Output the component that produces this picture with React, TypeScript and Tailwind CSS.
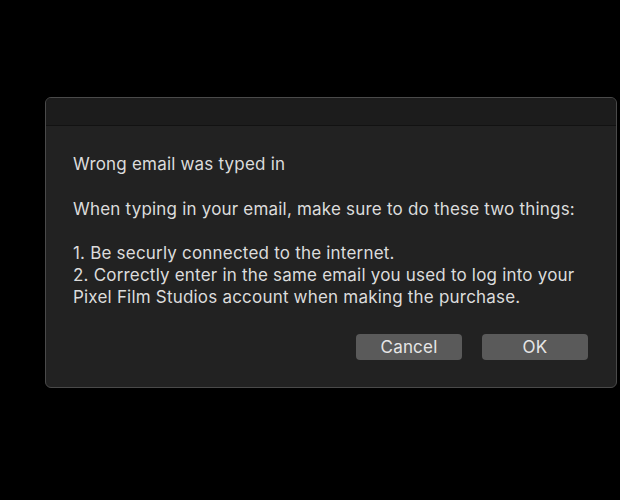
import React from "react";

export default function App() {
  return (
    <div className="w-[620px] h-[500px] bg-black relative" style={{ fontFamily: 'Inter, "Liberation Sans", Arial, sans-serif' }}>
      <div className="absolute left-[45px] top-[97px] w-[572px] h-[291px] rounded-[6px] border border-[#4a4a4a] bg-[#222222] flex flex-col overflow-hidden">
        <div className="h-[28px] bg-[#1c1c1c] border-b border-[#121212]" />
        <div className="flex-1 flex flex-col pl-[27px] pr-[20px] text-[17px] tracking-[0.2px] text-[#dcdcdc] leading-[22px]">
          <div className="mt-[27px]">Wrong email was typed in</div>
          <div className="mt-[23px]">When typing in your email, make sure to do these two things:</div>
          <div className="mt-[22px]">1. Be securly connected to the internet.</div>
          <div>2. Correctly enter in the same email you used to log into your</div>
          <div>Pixel Film Studios account when making the purchase.</div>
          <div className="flex justify-end gap-[20px] mt-[26px] pr-[8px]">
            <button className="w-[106px] h-[26px] rounded-[4px] bg-[#5a5a5a] text-[#e6e6e6] text-[17px] tracking-[0.2px]">Cancel</button>
            <button className="w-[106px] h-[26px] rounded-[4px] bg-[#5a5a5a] text-[#e6e6e6] text-[17px] tracking-[0.2px]">OK</button>
          </div>
        </div>
      </div>
    </div>
  );
}
